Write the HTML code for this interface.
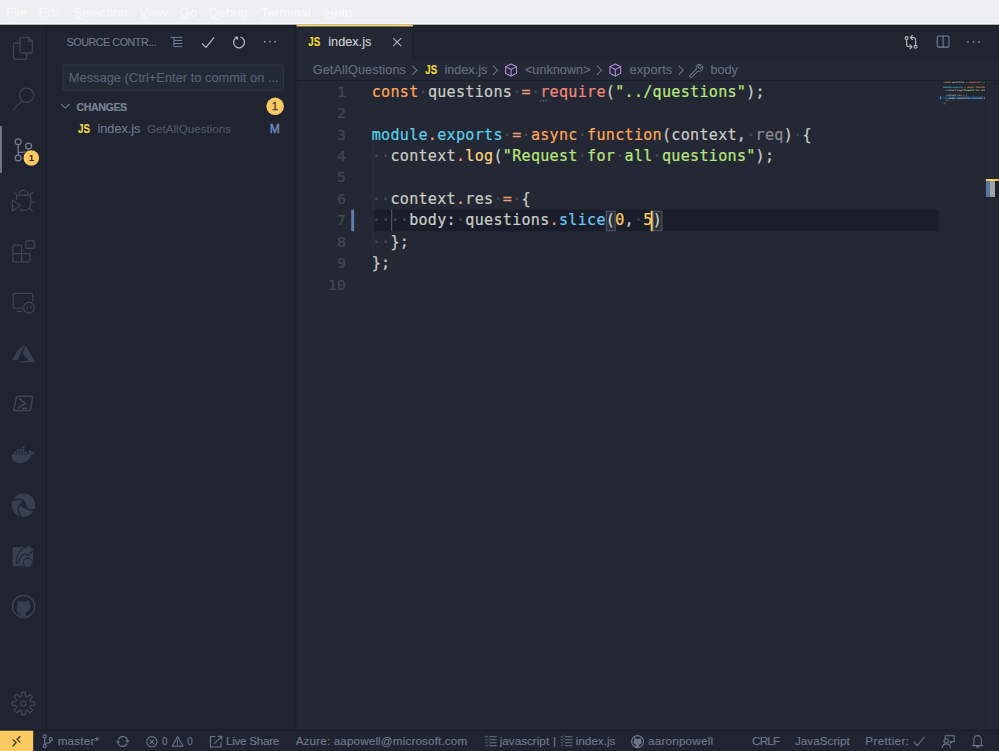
<!DOCTYPE html>
<html lang="en">
<head>
<meta charset="utf-8">
<title>index.js - Visual Studio Code</title>
<style>
*{box-sizing:border-box;margin:0;padding:0}
html,body{width:999px;height:751px;overflow:hidden;background:#1f2430}
body{font-family:"Liberation Sans","DejaVu Sans",sans-serif;font-size:13px;color:#707a8c;-webkit-text-stroke:.15px}
#app{position:absolute;left:0;top:0;width:1024px;height:770px;transform:scale(0.975586);transform-origin:0 0;background:#1f2430;overflow:hidden}
svg{display:block;overflow:visible}
/* menu bar */
#menubar{position:absolute;left:0;top:0;width:1024px;height:26px;background:#eeeff1;color:#f9f9fa;font-size:13.5px;line-height:26px;white-space:nowrap}
#menubar span{position:absolute;top:0}
#menubar u{text-decoration-thickness:1px;text-underline-offset:1px}
/* activity bar */
#activity{position:absolute;left:0;top:26px;width:48px;height:722px;background:#1f2430;border-right:1px solid #181c27}

#ov{position:absolute;left:0;top:0;width:1024px;height:770px;pointer-events:none;z-index:5}
.ai{stroke:#3e4454;fill:none;stroke-width:1.3;stroke-linecap:round;stroke-linejoin:round}
.af{fill:#383f4f;stroke:none}
/* sidebar */
#sidebar{position:absolute;left:48px;top:26px;width:256px;height:722px;background:#1f2430;border-right:1px solid #181c27}

/* sidebar content */
#sidebar span,#sidebar svg,#sidebar div{position:absolute}
#sb-title{left:20.2px;top:0;line-height:35px;font-size:11px;color:#707a8c;white-space:nowrap;letter-spacing:-0.45px}
#sb-input{left:15.5px;top:39.5px;width:227.6px;height:27.6px;background:#242936;border:1px solid #2f3545;border-radius:1px}
#sb-ph{left:22.5px;top:40px;line-height:27px;font-size:13.2px;color:#596273;white-space:nowrap}
#sb-changes{left:30.4px;top:72.5px;line-height:22px;font-size:11px;font-weight:bold;color:#7a8496;white-space:nowrap;letter-spacing:-0.5px}
#sb-badge{left:224.7px;top:74px;width:18.4px;height:18.4px;border-radius:50%;background:#fbc961;color:#45412f;font-size:11.5px;font-weight:normal;-webkit-text-stroke:.35px;text-align:center;line-height:18.4px}
.js{font-weight:bold;color:#f1dd3c;font-size:12.2px;letter-spacing:0;white-space:nowrap;transform:scaleX(.82);transform-origin:0 50%}
#sb-js{left:32px;top:95px;line-height:22px}
#sb-file{left:51.9px;top:95px;line-height:22px;font-size:13px;color:#707a8c;white-space:nowrap}
#sb-dir{left:102.7px;top:95px;line-height:22px;font-size:11.93px;color:#4f5767;white-space:nowrap}
#sb-m{left:228.4px;top:95px;line-height:22px;font-size:12.4px;font-weight:normal;-webkit-text-stroke:.45px;color:#6b8bbd;white-space:nowrap}
.sic{stroke:#707a8c;fill:none;stroke-width:1.1;stroke-linecap:butt;stroke-linejoin:miter}
/* editor */
#editor{position:absolute;left:304px;top:26px;width:720px;height:722px;background:#232834}
#tabs{position:absolute;left:0;top:0;width:720px;height:35px;background:#1f2430}
#tab{position:absolute;left:0;top:0;width:119.5px;height:35px;background:#232834;border-right:1px solid #1a1e29}
#crumbs{position:absolute;left:0;top:35px;width:720px;height:22px;background:#232834;font-size:13px;line-height:22px;color:#656e80;white-space:nowrap}
#crumbs span,#crumbs svg{position:absolute}
#code{position:absolute;left:0;top:57px;width:720px;height:665px;background:#232834}

#tab span{position:absolute;white-space:nowrap}
#tab-js{left:12.2px;top:0;line-height:35px}
#tab-t{left:32.5px;top:-.6px;line-height:35px;font-size:13px;color:#cfd1d3}

/* code */
#code{font-family:"DejaVu Sans Mono","Liberation Mono",monospace;font-size:15.45px;letter-spacing:.3px;line-height:22px;color:#cbccc6;white-space:pre;-webkit-text-stroke:.22px}
#code .ln{position:absolute;left:0;width:720px;height:22px}
#code .no{position:absolute;right:669px;top:0.3px;color:#414857;text-align:right;font-size:15.2px}
#code .tx{position:absolute;left:77px;top:0}
#code b{font-weight:normal}
#code i{font-style:normal;color:#454b5c}
.k{color:#ffa759}.o{color:#f29e74}.r{color:#f28779}.s{color:#bae67e}.e{color:#5ccfe6}.e2{color:#6ac8f4}.f{color:#ffd580}.n{color:#ffcc66}.p{color:#8a8d91}
#curline{position:absolute;left:77.6px;top:132px;width:580px;height:22px;background:#191e2a}
.guide{position:absolute;width:1px;background:#2e3342}
.bm{position:absolute;top:133px;height:20.5px;width:10.4px;border:1px solid #535a69;background:#2a2f3c}
#cursor{position:absolute;left:363.3px;top:132.5px;width:2px;height:21px;background:#ffcc66}
#gitmod{position:absolute;left:56.2px;top:132px;width:3px;height:22px;background:#5f80ab}
/* status */
#st-remote{position:absolute;left:0;top:0;width:34.2px;height:22px;background:#fbc961}

#status{position:absolute;left:0;top:748px;width:1024px;height:22px;background:#1f2430;border-top:1px solid #1a1e29;color:#707a8c;font-size:12px;line-height:22px;white-space:nowrap}
#status span,#status svg{position:absolute;top:0}
</style>
</head>
<body>
<div id="app">
  <div id="menubar">
    <span id="m1" style="left:6.3px"><u>F</u>ile</span>
    <span id="m2" style="left:39.4px"><u>E</u>dit</span>
    <span id="m3" style="left:75px"><u>S</u>election</span>
    <span id="m4" style="left:143px"><u>V</u>iew</span>
    <span id="m5" style="left:184.3px"><u>G</u>o</span>
    <span id="m6" style="left:214.2px"><u>D</u>ebug</span>
    <span id="m7" style="left:267.5px"><u>T</u>erminal</span>
    <span id="m8" style="left:333px"><u>H</u>elp</span>
  </div>

  <div id="activity">
  </div>

  <div id="sidebar">
    <span id="sb-title">SOURCE CONTR...</span>
    <svg id="sb-icons" style="left:0;top:0" width="256" height="35" viewBox="0 0 256 35">
      <path d="M126.8 12.3h12.2M130.6 15.45h8.4M130.6 18.6h8.4M130.6 21.75h8.4M130.3 12.3v9.9" stroke="#6f83a3" stroke-width="1" fill="none"/>
      <path d="M159 18.4l4.1 4.2l8.4-10.4" stroke="#b9bcc3" stroke-width="1.25" fill="none"/>
      <path d="M198.3 11.9A5.6 5.6 0 1 1 193.3 13.2" stroke="#b9bcc3" stroke-width="1.25" fill="none"/>
      <path d="M192.2 11.6h3.6v3.6z" fill="#c5c8ce"/>
      <circle cx="223.4" cy="16.8" r="0.95" fill="#6f8bbb"/><circle cx="228.7" cy="16.8" r="0.95" fill="#6f8bbb"/><circle cx="234" cy="16.8" r="0.95" fill="#6f8bbb"/>
    </svg>
    <div id="sb-input"></div>
    <span id="sb-ph">Message (Ctrl+Enter to commit on ...</span>
    <svg id="sb-chev" style="left:14.3px;top:79px" width="10" height="8" viewBox="0 0 10 8"><path class="sic" style="stroke-width:1.1" d="M0.6 1.4L5 5.8L9.4 1.4"/></svg>
    <span id="sb-changes">CHANGES</span>
    <div id="sb-badge">1</div>
    <span id="sb-js" class="js">JS</span>
    <span id="sb-file">index.js</span>
    <span id="sb-dir">GetAllQuestions</span>
    <span id="sb-m">M</span>
  </div>

  <div id="editor">
    <div id="tabs"><div id="tab"><span id="tab-js" class="js">JS</span><span id="tab-t">index.js</span></div></div>
    <div id="crumbs">
      <span id="c1" style="left:16.5px;letter-spacing:.12px">GetAllQuestions</span>
      <span id="c-js" class="js" style="left:131.6px">JS</span>
      <span id="c2" style="left:151.5px">index.js</span>
      <span id="c3" style="left:234.1px">&lt;unknown&gt;</span>
      <span id="c4" style="left:341.2px;letter-spacing:.2px">exports</span>
      <span id="c5" style="left:424.2px">body</span>
    </div>
    <div id="code">
      <div id="curline"></div>
      <div id="gitmod"></div>
      <div class="guide" style="left:77.6px;top:66px;height:110px"></div>
      <div class="guide" style="left:96.8px;top:132px;height:22px;background:#59606f"></div>
      <div class="bm" style="left:316.6px"></div>
      <div class="bm" style="left:364.5px"></div>
      <div class="ln" style="top:0px"><span class="no">1</span><span class="tx"><b class="k">const</b><i>·</i>questions<i>·</i><b class="o">=</b><i>·</i><b class="r">require</b>(<b class="s">"../questions"</b>);</span></div>
      <div class="ln" style="top:22px"><span class="no">2</span><span class="tx"></span></div>
      <div class="ln" style="top:44px"><span class="no">3</span><span class="tx"><b class="e">module</b><b class="o">.</b><b class="e">exports</b><i>·</i><b class="o">=</b><i>·</i><b class="k">async</b><i>·</i><b class="k">function</b>(context,<i>·</i><b class="p">req</b>)<i>·</i>{</span></div>
      <div class="ln" style="top:66px"><span class="no">4</span><span class="tx"><i>··</i>context<b class="o">.</b><b class="f">log</b>(<b class="s">"Request</b><i>·</i><b class="s">for</b><i>·</i><b class="s">all</b><i>·</i><b class="s">questions"</b>);</span></div>
      <div class="ln" style="top:88px"><span class="no">5</span><span class="tx"></span></div>
      <div class="ln" style="top:110px"><span class="no">6</span><span class="tx"><i>··</i>context<b class="o">.</b>res<i>·</i><b class="o">=</b><i>·</i>{</span></div>
      <div class="ln" style="top:132px"><span class="no">7</span><span class="tx"><i>····</i>body:<i>·</i>questions<b class="o">.</b><b class="e2">slice</b>(<b class="n">0</b>,<i>·</i><b class="n">5</b>)</span></div>
      <div class="ln" style="top:154px"><span class="no">8</span><span class="tx"><i>··</i>};</span></div>
      <div class="ln" style="top:176px"><span class="no">9</span><span class="tx">};</span></div>
      <div class="ln" style="top:198px"><span class="no">10</span><span class="tx"></span></div>
      <div id="cursor"></div>
    </div>
  </div>


  <svg id="ov" viewBox="0 0 999 751" preserveAspectRatio="none">
    <!-- activity bar icons (coordinates in screen px) -->

    <g id="ed-icons">
      <path d="M393.2 38L401.2 46M401.2 38L393.2 46" stroke="#b4b8c0" stroke-width="1.05" fill="none"/>
      <path d="M412.2 65.6L416.8 70.2L412.2 74.8" stroke="#6c7688" stroke-width="1.05" fill="none"/><path d="M493.0 65.6L497.6 70.2L493.0 74.8" stroke="#6c7688" stroke-width="1.05" fill="none"/><path d="M597.0 65.6L601.6 70.2L597.0 74.8" stroke="#6c7688" stroke-width="1.05" fill="none"/><path d="M678.6 65.6L683.2 70.2L678.6 74.8" stroke="#6c7688" stroke-width="1.05" fill="none"/>
      <path d="M511.1 63.9L516.5 66.6V73.2L511.1 76.1L505.7 73.2V66.6zM505.7 66.6L511.1 69.5L516.5 66.6M511.1 69.5V76.1" stroke="#b58fe0" stroke-width="1.05" fill="none" stroke-linejoin="round"/><path d="M615.3 63.9L620.7 66.6V73.2L615.3 76.1L609.9 73.2V66.6zM609.9 66.6L615.3 69.5L620.7 66.6M615.3 69.5V76.1" stroke="#b58fe0" stroke-width="1.05" fill="none" stroke-linejoin="round"/>
      
      <g stroke="#b9bcc3" stroke-width="1.1" fill="none" stroke-linejoin="round" stroke-linecap="round">
        <circle cx="906.6" cy="38.1" r="1.45"/><circle cx="915.6" cy="46.8" r="1.45"/>
        <path d="M906.6 39.600V44.300Q906.600 46.800 909.100 46.800H911.800M910 44.800L912 46.800L910 48.800"/>
        <path d="M915.600 45.300V40Q915.600 37.500 913.100 37.500H910.600M912.400 35.500L910.400 37.500L912.400 39.500"/>
      </g>
      <rect x="937.2" y="35.900" width="11.800" height="11.200" rx="1.400" stroke="#6f83a3" stroke-width="1.050" fill="none"/>
      <path d="M943.100 35.900V47.100" stroke="#6f83a3" stroke-width="1.050"/>
      <circle cx="968" cy="41.900" r="0.950" fill="#6f8bbb"/><circle cx="973.600" cy="41.900" r="0.950" fill="#6f8bbb"/><circle cx="979" cy="41.900" r="0.950" fill="#6f8bbb"/>
      <circle cx="541" cy="100.700" r="0.600" fill="#a9adb4"/><circle cx="543.600" cy="100.700" r="0.600" fill="#a9adb4"/><circle cx="546.200" cy="100.700" r="0.600" fill="#a9adb4"/>
      <path id="wrench" d="M701.2 64.6a3.6 3.6 0 0 0-4.800 4.500l-6.300 6.300a1.250 1.250 0 0 0 1.800 1.800l6.300-6.300a3.600 3.600 0 0 0 4.500-4.800l-2.300 2.300l-1.700-.4l-.4-1.700z" stroke="#6c7688" stroke-width="1" fill="none" stroke-linejoin="round"/>
    </g>


    <g id="edges">
      <rect x="296.600" y="80" width="702.400" height="1" fill="#1b1f2a"/>
      <rect x="0" y="22.800" width="999" height="1.900" fill="#f9f9fa"/>
      <rect x="0" y="24.700" width="999" height="1.200" fill="#151a27"/>
      <rect x="296.600" y="24.700" width="116.300" height="2.300" fill="#fdd165"/>
      <rect x="296.600" y="26.500" width="116.300" height="1.200" fill="#151b2e"/>
    </g>
    <g id="minimap">
      <rect x="943.3" y="96.4" width="42.3" height="2.7" fill="#294566"/>
      <rect x="939.8" y="96.4" width="1.4" height="2.7" fill="#1ba0d0"/>
      <clipPath id="mmclip"><rect x="940" y="80" width="45.3" height="40"/></clipPath><g clip-path="url(#mmclip)"><g id="mmtext" font-family="DejaVu Sans Mono, Liberation Mono, monospace" font-size="23.3" transform="scale(.1)" font-weight="bold" xml:space="preserve" opacity="0.9"><text x="9433" y="829"><tspan fill="#ffa759">const</tspan><tspan>&#160;</tspan><tspan fill="#cbccc6">questions</tspan><tspan>&#160;</tspan><tspan fill="#f29e74">=</tspan><tspan>&#160;</tspan><tspan fill="#f28779">require</tspan><tspan fill="#cbccc6">(</tspan><tspan fill="#bae67e">"../questions"</tspan><tspan fill="#cbccc6">);</tspan></text><text x="9433" y="881"><tspan fill="#5ccfe6">module</tspan><tspan fill="#f29e74">.</tspan><tspan fill="#5ccfe6">exports</tspan><tspan>&#160;</tspan><tspan fill="#f29e74">=</tspan><tspan>&#160;</tspan><tspan fill="#ffa759">async</tspan><tspan>&#160;</tspan><tspan fill="#ffa759">function</tspan><tspan fill="#cbccc6">(context,</tspan><tspan>&#160;</tspan><tspan fill="#8a8d91">req</tspan><tspan fill="#cbccc6">)</tspan><tspan>&#160;</tspan><tspan fill="#cbccc6">{</tspan></text><text x="9433" y="907"><tspan>&#160;&#160;</tspan><tspan fill="#cbccc6">context</tspan><tspan fill="#f29e74">.</tspan><tspan fill="#ffd580">log</tspan><tspan fill="#cbccc6">(</tspan><tspan fill="#bae67e">"Request</tspan><tspan>&#160;</tspan><tspan fill="#bae67e">for</tspan><tspan>&#160;</tspan><tspan fill="#bae67e">all</tspan><tspan>&#160;</tspan><tspan fill="#bae67e">questions"</tspan><tspan fill="#cbccc6">);</tspan></text><text x="9433" y="959"><tspan>&#160;&#160;</tspan><tspan fill="#cbccc6">context</tspan><tspan fill="#f29e74">.</tspan><tspan fill="#cbccc6">res</tspan><tspan>&#160;</tspan><tspan fill="#f29e74">=</tspan><tspan>&#160;</tspan><tspan fill="#cbccc6">{</tspan></text><text x="9433" y="985"><tspan>&#160;&#160;&#160;&#160;</tspan><tspan fill="#cbccc6">body:</tspan><tspan>&#160;</tspan><tspan fill="#cbccc6">questions</tspan><tspan fill="#f29e74">.</tspan><tspan fill="#5ccfe6">slice</tspan><tspan fill="#cbccc6">(</tspan><tspan fill="#ffcc66">0</tspan><tspan fill="#cbccc6">,</tspan><tspan>&#160;</tspan><tspan fill="#ffcc66">5</tspan><tspan fill="#cbccc6">)</tspan></text><text x="9433" y="1011"><tspan>&#160;&#160;</tspan><tspan fill="#cbccc6">};</tspan></text><text x="9433" y="1037"><tspan fill="#cbccc6">};</tspan></text></g></g>
      <rect x="985.2" y="81" width="0.8" height="649" fill="#1d212c"/>
      <rect x="985.9" y="179" width="13.1" height="2" fill="#e3bb5e"/>
      <rect x="985.9" y="179" width="9.1" height="2" fill="#f3ca66"/>
      <rect x="985.9" y="181" width="4.1" height="15.9" fill="#56789f"/>
      <rect x="990" y="181" width="5" height="15.9" fill="#a3a3a3"/>
      <rect x="995" y="181" width="4" height="16.5" fill="#1c202c"/>
    </g>

    <g id="st-icons" stroke="#6b7587" fill="none" stroke-width="1.1" stroke-linecap="round" stroke-linejoin="round">
      <path d="M12.7 739.3L16.1 742.4L12.7 746M20.3 736L17.1 739.1L20.3 742.2" stroke="#3a3422" stroke-width="1.3" stroke-linecap="butt" stroke-linejoin="miter"/>
      <circle cx="44.7" cy="736.2" r="1.55"/><circle cx="44.7" cy="746" r="1.55"/><circle cx="50.8" cy="739" r="1.55"/>
      <path d="M44.7 737.8V744.4M50.8 740.6C50.8 743 48.500 742.900 44.700 743.200"/>
      <path d="M118.400 739.300A4.700 4.700 0 0 1 127.400 740.300M127 743.300A4.700 4.700 0 0 1 118 742.300" stroke-width="1.200" stroke-linecap="butt"/>
      <path d="M125.300 740.100H129.700L127.500 742.500zM115.800 742.300H120.100L117.900 739.900z" fill="#6b7587" stroke="none"/>
      <circle cx="151.85" cy="741.5" r="5.1"/>
      <path d="M149.900 739.600l3.900 3.900M153.800 739.600l-3.900 3.900" stroke-width="1"/>
      <path d="M177.600 736.300L183 746H172.200z"/>
      <path d="M177.600 739.600V743.200M177.600 744.300V744.800" stroke-width="1"/>
      <path d="M215.400 736.300H210.500V746.800H221V741.800M217.600 736H221.800V740.200M221.600 736.200L214.400 743.400" stroke-linejoin="miter" stroke-linecap="butt"/>
      <path d="M489.6 736.6H496.3M489.6 739.6H496.3M489.6 742.6H496.3M489.6 745.6H496.3" stroke="#6b7587" stroke-width="1.05" fill="none"/><path d="M485.3 736.2l0.9 0.9l1.6-1.6M485.3 739.2l0.9 0.9l1.6-1.6M485.3 742.2l0.9 0.9l1.6-1.6M485.3 745.2l0.9 0.9l1.6-1.6" stroke="#6b7587" stroke-width="0.8" fill="none"/><path d="M565.3 736.6H572.0M565.3 739.6H572.0M565.3 742.6H572.0M565.3 745.6H572.0" stroke="#6b7587" stroke-width="1.05" fill="none"/><path d="M561.0 736.2l0.9 0.9l1.6-1.6M561.0 739.2l0.9 0.9l1.6-1.6M561.0 742.2l0.9 0.9l1.6-1.6M561.0 745.2l0.9 0.9l1.6-1.6" stroke="#6b7587" stroke-width="0.8" fill="none"/>
      <circle cx="637.6" cy="741.4" r="6" stroke-width="1.2"/>
      <path d="M634.300 737.800c.7.100 1.300.4 1.800.9a5 5 0 0 1 3 0c.5-.5 1.100-.8 1.800-.9c.3.700.3 1.400.100 2c.5.600.7 1.200.7 2c0 1.900-1.300 2.600-2.700 2.800v2.800a6 6 0 0 1-2.800 0v-.9c-1.500.2-1.800-1-2.400-1.300c1-.3 1.300.7 2.400.5v-1.100c-1.400-.2-2.700-.9-2.700-2.800c0-.8.200-1.400.7-2c-.2-.6-.2-1.300.100-2z" fill="#6b7587" stroke="none"/>
      <path d="M913.900 741.700L917.300 745.400L924.400 736.800" stroke-linecap="butt" stroke-linejoin="miter"/>
      <path d="M945.200 738.300V735.600H954.200V741.400H952.300L950.900 742.900V741.400H950" stroke-linejoin="miter"/>
      <circle cx="946.200" cy="740.700" r="2.100"/>
      <path d="M942.400 747.300C942.600 744.800 944.300 743.700 946.200 743.700C948.100 743.700 950 744.800 950.400 747.300"/>
      <path d="M973.900 745.300V739.300A3.700 3.900 0 0 1 981.300 739.300V745.300M972.400 745.400H982.800M976.500 746.300L977.600 747.700L978.700 746.300"/>
    </g>
    <g id="act-icons">
      <rect x="0" y="126" width="1.9" height="47" fill="#707a8c"/>
      <!-- files -->
      <path class="ai" d="M19.3 43H15a1.5 1.5 0 0 0-1.5 1.5V57.8a1.5 1.5 0 0 0 1.5 1.5H25.2a1.5 1.5 0 0 0 1.5-1.5V53.2"/>
      <path class="ai" d="M21.5 37.3H28.4L32.4 41.3V51.5a1.5 1.5 0 0 1-1.5 1.5H21.5a1.5 1.5 0 0 1-1.5-1.5V38.8a1.5 1.5 0 0 1 1.5-1.5zM28.4 37.3V41.3H32.4"/>
      <!-- search -->
      <circle class="ai" cx="26.6" cy="95.3" r="7.1"/>
      <path class="ai" d="M21.6 100.9L13.3 109.8"/>
      <!-- source control -->
      <g style="stroke:#727c8e" class="ai">
        <circle cx="18.2" cy="141.7" r="2.9"/><circle cx="18.2" cy="158" r="2.9"/><circle cx="28.6" cy="146" r="2.9"/>
        <path d="M18.2 144.6V155.1M28.6 148.9C28.6 152.4 25 152.3 18.2 152.3"/>
      </g>
      <circle cx="31.3" cy="158" r="8.4" fill="#1f2430"/>
      <circle cx="31.3" cy="158" r="7.8" fill="#fbc961"/>
      <text x="31.4" y="161.2" text-anchor="middle" font-family="Liberation Sans, sans-serif" font-weight="bold" font-size="9.5" fill="#2e2b20">1</text>
      <!-- debug -->
      <path class="ai" d="M19 194.9A4.7 4.7 0 0 1 28.4 194.9M17.2 195.2H30M30.3 195.2C31.2 197.5 31.2 203 30.3 205.5C29 209.3 25.6 210.5 23.6 210.5C22.2 210.5 21 210.1 20.2 209.5M17 195.2C16.6 196.5 16.5 198 16.6 199.3M14 192.6L17 195.2M29.8 195.2L32.6 192.3M31.4 202H34.9M29.6 208.3L32.2 211M12.3 200V210.9L20.5 205.4z"/>
      <!-- extensions -->
      <rect class="ai" x="25.9" y="240.8" width="8.4" height="7.5" rx="1"/>
      <path class="ai" d="M13.9 245.1H20.6a1 1 0 0 1 1 1V253.6H29a1 1 0 0 1 1 1V260.9a1 1 0 0 1-1 1H13.9a1 1 0 0 1-1-1V246.1a1 1 0 0 1 1-1zM21.6 253.6V261.9M12.9 253.6H21.6"/>
      <!-- remote explorer -->
      <path class="ai" d="M22.4 308H14.3a1 1 0 0 1-1-1V294.3a1 1 0 0 1 1-1H31.7a1 1 0 0 1 1 1V301M17.2 311.2H22"/>
      <circle class="ai" cx="29" cy="307.6" r="5.4"/>
      <path class="ai" style="stroke-width:.9" d="M26.5 306.4l1.5 1.5l-1.5 1.5M31.6 305.6l-1.5 1.5l1.5 1.5"/>
      <!-- azure -->
      <path class="af" transform="translate(12 341.6) scale(.967)" d="M5.483 21.3H24L14.025 4.013l-3.038 8.347 5.836 6.938L5.483 21.3zM13.23 2.7L6.105 8.677 0 19.253h5.505v.014L13.23 2.7z"/>
      <!-- powershell -->
      <path class="ai" style="stroke-width:1.4" d="M17.6 396.2H31.6a1 1 0 0 1 1 1.2L30.5 409.4a1.2 1.2 0 0 1-1.2 1H14.8a1 1 0 0 1-1-1.2L16.4 397.2a1.2 1.2 0 0 1 1.2-1z"/>
      <path class="ai" style="stroke-width:1.6" d="M19.8 398.9L25.2 403.2L18.3 408M22.8 408.1H26.6"/>
      <!-- docker -->
      <path class="af" transform="translate(11.7 442.9) scale(.967)" d="M13.983 11.078h2.119a.186.186 0 00.186-.185V9.006a.186.186 0 00-.186-.186h-2.119a.185.185 0 00-.185.185v1.888c0 .102.083.185.185.185m-2.954-5.43h2.118a.186.186 0 00.186-.186V3.574a.186.186 0 00-.186-.185h-2.118a.185.185 0 00-.185.185v1.888c0 .102.082.185.185.185m0 2.716h2.118a.187.187 0 00.186-.186V6.29a.186.186 0 00-.186-.185h-2.118a.185.185 0 00-.185.185v1.887c0 .102.082.185.185.186m-2.93 0h2.12a.186.186 0 00.184-.186V6.29a.185.185 0 00-.185-.185H8.1a.185.185 0 00-.185.185v1.887c0 .102.083.185.185.186m-2.964 0h2.119a.186.186 0 00.185-.186V6.29a.185.185 0 00-.185-.185H5.136a.186.186 0 00-.186.185v1.887c0 .102.084.185.186.186m5.893 2.715h2.118a.186.186 0 00.186-.185V9.006a.186.186 0 00-.186-.186h-2.118a.185.185 0 00-.185.185v1.888c0 .102.082.185.185.185m-2.93 0h2.12a.185.185 0 00.184-.185V9.006a.185.185 0 00-.184-.186h-2.12a.185.185 0 00-.184.185v1.888c0 .102.083.185.185.185m-2.964 0h2.119a.185.185 0 00.185-.185V9.006a.185.185 0 00-.184-.186h-2.12a.186.186 0 00-.186.186v1.887c0 .102.084.185.186.185m-2.92 0h2.12a.185.185 0 00.184-.185V9.006a.185.185 0 00-.184-.186h-2.12a.185.185 0 00-.184.185v1.888c0 .102.082.185.185.185M23.763 9.89c-.065-.051-.672-.51-1.954-.51-.338.001-.676.03-1.01.087-.248-1.7-1.653-2.53-1.716-2.566l-.344-.199-.226.327c-.284.438-.49.922-.612 1.43-.23.97-.09 1.882.403 2.661-.595.332-1.55.413-1.744.42H.751a.751.751 0 00-.75.748 11.376 11.376 0 00.692 4.062c.545 1.428 1.355 2.48 2.41 3.124 1.18.723 3.1 1.137 5.275 1.137.983.003 1.963-.086 2.93-.266a12.248 12.248 0 003.823-1.389c.98-.567 1.86-1.288 2.61-2.136 1.252-1.418 1.998-2.997 2.553-4.4h.221c1.372 0 2.215-.549 2.68-1.009.309-.293.55-.65.707-1.046l.098-.288z"/>

      <!-- edge -->
      <circle class="af" cx="23.4" cy="505" r="11.7"/>
      <path d="M10.5 501C14 499.2 18.5 498.7 21.6 499.5C24.2 500.3 25.3 502.6 25.5 505C25.6 507.3 26.3 508.6 28.2 509.2C30.5 510 32.8 510.2 35.6 510" stroke="#1f2430" stroke-width="1.45" fill="none"/>
      <path d="M23.2 501.3C20.6 503.3 18.6 506 18.3 508.8C18 511.6 19.3 514.6 21.6 517.2" stroke="#1f2430" stroke-width="1.2" fill="none"/>
      <path d="M22.6 500.6C24.8 501.6 25.8 504.4 25.9 508.6C24.2 508.2 22.2 507.4 20.7 505.8C21 503.8 21.7 502 22.6 500.6z" fill="#1f2430"/>
      <!-- live share -->
      <rect class="af" x="12.5" y="546.8" width="20.6" height="19.3" rx="2.2"/>
      <path d="M17.1 563.4C16.2 563 16.2 561.6 16.4 560.2C16.9 556.5 18.4 552.2 21.3 549.4C23 547.8 25 547 27 546.9L27.2 544.7L34.6 549.3L27.5 555.5L26.1 553.6C25.2 553.4 24.4 553.5 23.8 553.8C21.6 555.3 20.1 558 19.2 560.4C18.7 561.8 18.4 563.6 17.1 563.4z" fill="#383f4f" stroke="#1f2430" stroke-width="1"/>
      <circle cx="27.9" cy="562.6" r="4.6" fill="#383f4f" stroke="#1f2430" stroke-width="1"/>
      <!-- github -->
      <circle class="ai" cx="23.6" cy="606.3" r="11.1"/>
      <path class="af" d="M17.9 600.3c1.2.1 2.2.7 3 1.4a8.5 8.5 0 0 1 5.2 0c.8-.7 1.8-1.3 3-1.4c.5 1.2.5 2.4.2 3.3c.8 1 1.2 2.100 1.100 3.400c0 3.300-2.200 4.400-4.600 4.700v5.600a11 11 0 0 1-4.600 0v-1.800c-2.600.3-3-1.800-4.200-2.300c1.700-.5 2.200 1.300 4.200 1v-1c-2.400-.300-4.600-1.400-4.600-4.700c0-1.300.4-2.400 1.100-3.400c-.3-.9-.3-2.100.2-3.300z"/>
      <!-- gear -->
      <path class="ai" d="M21.41 695.86L21.52 692.06L25.28 692.06L25.39 695.86A7.7 7.7 0 0 1 27.25 696.63L30.02 694.02L32.68 696.68L30.07 699.45A7.7 7.7 0 0 1 30.84 701.31L34.64 701.42L34.64 705.18L30.84 705.29A7.7 7.7 0 0 1 30.07 707.15L32.68 709.92L30.02 712.58L27.25 709.97A7.7 7.7 0 0 1 25.39 710.74L25.28 714.54L21.52 714.54L21.41 710.74A7.7 7.7 0 0 1 19.55 709.97L16.78 712.58L14.12 709.92L16.73 707.15A7.7 7.7 0 0 1 15.96 705.29L12.16 705.18L12.16 701.42L15.96 701.31A7.7 7.7 0 0 1 16.73 699.45L14.12 696.68L16.78 694.02L19.55 696.63A7.7 7.7 0 0 1 21.41 695.86z"/>
      <circle class="ai" cx="23.4" cy="703.3" r="2.6"/>
    </g>
  </svg>
  <div id="status">
    <div id="st-remote"></div>
    <span id="st-master" style="letter-spacing:0.19px;left:59.1px">master*</span>
    <span id="st-e0" style="transform:scaleX(.84);transform-origin:0 50%;left:166.1px">0</span>
    <span id="st-w0" style="transform:scaleX(.84);transform-origin:0 50%;left:192.4px">0</span>
    <span id="st-ls" style="letter-spacing:-0.3px;left:231.7px">Live Share</span>
    <span id="st-az" style="letter-spacing:0.125px;left:303.1px">Azure: aapowell@microsoft.com</span>
    <span id="st-jsl" style="left:512.2px">javascript</span>
    <span id="st-bar" style="left:566.8px">|</span>
    <span id="st-idx" style="left:590.1px">index.js</span>
    <span id="st-aa" style="letter-spacing:0.2px;left:664.2px">aaronpowell</span>
    <span id="st-crlf" style="letter-spacing:-0.8px;left:770.8px">CRLF</span>
    <span id="st-lang" style="left:814.9px">JavaScript</span>
    <span id="st-pr" style="letter-spacing:0.33px;left:887.0px">Prettier:</span>
  </div>
</div>
</body>
</html>
